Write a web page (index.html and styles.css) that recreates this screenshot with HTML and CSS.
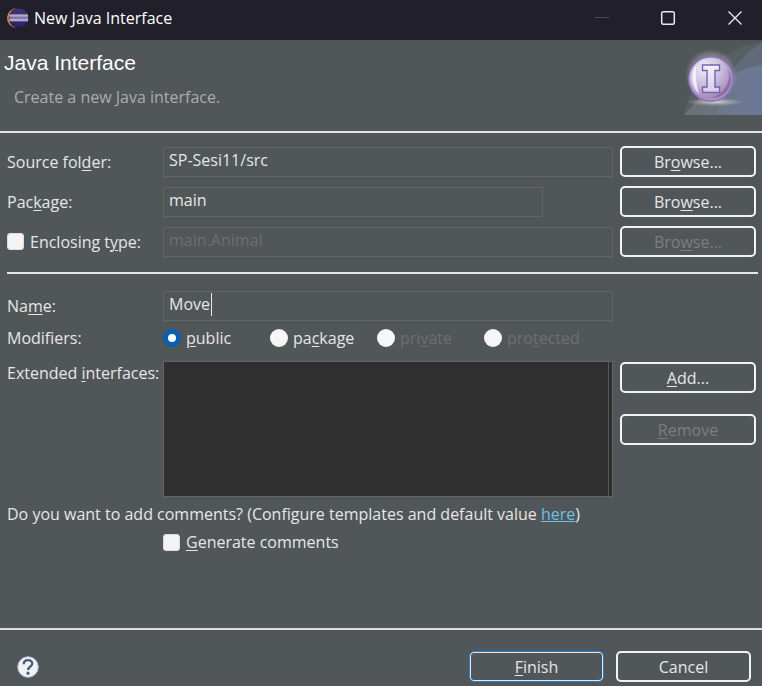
FILE: index.html
```html
<!DOCTYPE html>
<html lang="en">
<head>
<meta charset="utf-8">
<title>New Java Interface</title>
<link rel="stylesheet" href="styles.css">
</head>
<body>
<div class="dialog">
  <header class="titlebar">
    <svg class="app-icon" width="22" height="22" viewBox="0 0 22 22" aria-hidden="true">
      <defs><linearGradient id="ecl" x1="0" y1="0" x2="0" y2="1"><stop offset="0" stop-color="#43317c"/><stop offset="1" stop-color="#2b2165"/></linearGradient></defs>
      <circle cx="10" cy="11" r="10" fill="#d98a3a"/>
      <circle cx="12" cy="11" r="10.300" fill="#211f29"/>
      <circle cx="12" cy="11" r="9.500" fill="url(#ecl)"/>
      <path d="M2.500 7.500H20.800L21.300 14.500H2.500Z" fill="#8478ae"/>
      <path d="M2.500 8.500H21M2.500 13H21" stroke="#b5a8c6" stroke-width="1.800"/>
    </svg>
    <h1 class="window-title">New Java Interface</h1>
    <div class="window-controls">
      <button class="win-btn" type="button" aria-label="Minimize" disabled><svg width="16" height="16" viewBox="0 0 16 16"><path d="M1 7.500H15" stroke="#4b4a52" fill="none"/></svg></button>
      <button class="win-btn" type="button" aria-label="Maximize"><svg width="16" height="16" viewBox="0 0 16 16"><rect x="1.700" y="1.700" width="12.600" height="12.600" rx="1.500" stroke="#e8e8ea" stroke-width="1.500" fill="none"/></svg></button>
      <button class="win-btn" type="button" aria-label="Close"><svg width="16" height="16" viewBox="0 0 16 16"><path d="M1.500 1.500L14.500 14.500M14.500 1.500L1.500 14.500" stroke="#e8e8ea" stroke-width="1.400" fill="none"/></svg></button>
    </div>
  </header>

  <section class="banner">
    <div class="banner-text">
      <h2 class="banner-title">Java Interface</h2>
      <p class="banner-desc">Create a new Java interface.</p>
    </div>
    <svg class="banner-art" width="80" height="75" viewBox="0 0 80 75" aria-hidden="true">
      <defs>
        <linearGradient id="wash" x1="0" y1="0" x2="1" y2="0"><stop offset="0" stop-color="#6a7175"/><stop offset="1" stop-color="#68748e"/></linearGradient>
        <radialGradient id="ball" cx=".35" cy=".25" r=".85"><stop offset="0" stop-color="#f0ebf8"/><stop offset=".45" stop-color="#cbbddd"/><stop offset=".8" stop-color="#a78bba"/><stop offset="1" stop-color="#b99bca"/></radialGradient>
        <radialGradient id="glow"><stop offset=".7" stop-color="#c8c8cc" stop-opacity=".45"/><stop offset="1" stop-color="#c8c8cc" stop-opacity="0"/></radialGradient>
        <radialGradient id="floor"><stop offset="0" stop-color="#d5d5d5"/><stop offset="1" stop-color="#b5b5b5" stop-opacity="0"/></radialGradient>
        <linearGradient id="letter" x1="0" y1="0" x2="0" y2="1"><stop offset="0" stop-color="#f4f2fa"/><stop offset="1" stop-color="#d6cbe6"/></linearGradient>
      </defs>
      <path d="M2 75C8 42 36 8 80 2V75Z" fill="#585f63"/>
      <path d="M2 75C24 50 46 31 80 25V75Z" fill="url(#wash)"/>
      <path d="M36 75C37 48 54 17 80 3V75Z" fill="#7282a4" opacity=".35"/>
      <circle cx="29" cy="35" r="26" fill="url(#glow)"/>
      <ellipse cx="33" cy="62" rx="29" ry="4" fill="url(#floor)"/>
      <circle cx="29" cy="39" r="22.200" fill="url(#ball)" stroke="#8a73bd" stroke-width="1.400"/>
      <path d="M14.500 25C8 34 9 46 17 54C14 44 13 34 14.500 25Z" fill="#fff" opacity=".75"/>
      <path d="M46 29C50 43 41 54 30 58C46 58 53 42 46 29Z" fill="#7e5c99" opacity=".65"/>
      <path d="M20.500 25H37.500V30.500H33V47H37.500V52.500H20.500V47H25V30.500H20.500Z" fill="url(#letter)" stroke="#7464b0" stroke-width="1.400"/>
    </svg>
  </section>

  <form class="form">
    <div class="grid">
      <label class="label" for="source">Source fol<u>d</u>er:</label>
      <input class="field" id="source" type="text" value="SP-Sesi11/src">
      <button class="btn" type="button">Br<u>o</u>wse...</button>

      <label class="label" for="package">Pac<u>k</u>age:</label>
      <input class="field field-short" id="package" type="text" value="main">
      <button class="btn" type="button">Bro<u>w</u>se...</button>

      <label class="label check"><input class="tick" type="checkbox"><span>Enclosing t<u>y</u>pe:</span></label>
      <input class="field" type="text" value="main.Animal" aria-label="Enclosing type" disabled>
      <button class="btn" type="button" disabled>Bro<u>w</u>se...</button>
    </div>

    <hr class="rule">

    <div class="grid grid-details">
      <label class="label" for="name">Na<u>m</u>e:</label>
      <div class="name-box">
        <input class="field" id="name" type="text" value="Move">
        <span class="caret"></span>
      </div>
      <span></span>

      <span class="label" id="mods">Modifiers:</span>
      <div class="radios" role="radiogroup" aria-labelledby="mods">
        <label class="radio"><input class="dot" type="radio" name="mod" checked><span><u>p</u>ublic</span></label>
        <label class="radio"><input class="dot" type="radio" name="mod"><span>pa<u>c</u>kage</span></label>
        <label class="radio off"><input class="dot" type="radio" name="mod" disabled><span>pri<u>v</u>ate</span></label>
        <label class="radio off"><input class="dot" type="radio" name="mod" disabled><span>pro<u>t</u>ected</span></label>
      </div>

      <span class="label label-top" id="ext">Extended <u>i</u>nterfaces:</span>
      <div class="list" role="listbox" aria-labelledby="ext"></div>
      <div class="stack">
        <button class="btn" type="button"><u>A</u>dd...</button>
        <button class="btn" type="button" disabled><u>R</u>emove</button>
      </div>
    </div>

    <p class="question">Do you want to add comments? (Configure templates and default value <a class="link" href="#">here</a>)</p>
    <div class="grid">
      <label class="check generate"><input class="tick" type="checkbox"><span><u>G</u>enerate comments</span></label>
    </div>
  </form>

  <footer class="footer">
    <button class="help" type="button" aria-label="Help">
      <svg width="22" height="22" viewBox="0 0 22 22"><circle cx="11" cy="11" r="10.300" fill="#f1f2f4" stroke="#aab9d0"/><path d="M6.700 8.200C6.800 2.800 15.500 3 15.300 7.800C15.200 10.600 11.200 10.500 11.100 14" fill="none" stroke="#465c86" stroke-width="2.300"/><circle cx="11" cy="17.200" r="1.600" fill="#465c86"/></svg>
    </button>
    <div class="actions">
      <button class="btn btn-default" type="submit"><u>F</u>inish</button>
      <button class="btn" type="button">Cancel</button>
    </div>
  </footer>
</div>
</body>
</html>
```
FILE: styles.css
```css
* { box-sizing: border-box; }

body {
  margin: 0;
  background: #515658;
  color: #e6e6e6;
  font: 16px/22px "Open Sans", "Noto Sans", sans-serif;
}

h1, h2, p { margin: 0; font-weight: 400; }
u { text-underline-offset: 2px; text-decoration-thickness: 1px; }
button, input { font: inherit; color: inherit; }

.dialog {
  display: flex;
  flex-direction: column;
  min-height: 100vh;
}

.titlebar {
  display: flex;
  align-items: center;
  height: 40px;
  padding: 0 0 4px 7px;
  background: #211f29;
}
.window-title {
  flex: 1;
  margin-left: 5px;
  font-size: 16px;
  line-height: 22px;
  color: #fff;
}
.window-controls { display: flex; }
.win-btn {
  display: grid;
  place-items: center;
  width: 66px;
  height: 36px;
  padding: 0;
  border: 0;
  background: none;
}
.win-btn:last-child { width: 61px; padding-left: 6px; }

.banner {
  display: flex;
  justify-content: space-between;
  height: 93px;
  border-bottom: 2px solid #e2e2e2;
}
.banner-text { padding: 11px 0 0 4px; }
.banner-title {
  font: 21px/24px "Liberation Sans", sans-serif;
  color: #fff;
}
.banner-desc {
  margin: 11px 0 0 10px;
  color: #acacac;
}

.form { flex: 1; padding: 13px 6px 0 7px; }

.grid {
  display: grid;
  grid-template-columns: 156px minmax(0, 1fr) 136px;
  row-gap: 9px;
  align-items: center;
}
.label { white-space: nowrap; }
.check { display: flex; align-items: center; gap: 6px; }
.tick {
  appearance: none;
  width: 17px;
  height: 17px;
  margin: 0;
  border: 1px solid #dcdcdc;
  border-radius: 3px;
  background: #f3f3f3;
}

.field {
  display: block;
  width: calc(100% - 7px);
  height: 30px;
  padding: 0 5px 4px;
  border: 1px solid #646464;
  background: transparent;
  outline: 0;
}
.field-short { width: calc(100% - 77px); }
.field:disabled { color: #6e6e6e; }

.btn {
  height: 31px;
  width: 136px;
  padding: 0;
  border: 2px solid #f2f2f2;
  border-radius: 5px;
  background: transparent;
}
.btn:disabled { color: #7d7d7d; }

.rule {
  height: 2px;
  margin: 15px -2px 17px 0;
  border: 0;
  background: #e6e6e6;
}

.grid-details { row-gap: 6px; }
.name-box { position: relative; }
.caret {
  position: absolute;
  left: 48px;
  top: 2px;
  width: 1px;
  height: 23px;
  background: #e6e6e6;
}
.radios {
  display: grid;
  grid-template-columns: repeat(4, 107px);
  grid-column: 2 / 4;
}
.radio { display: flex; align-items: center; gap: 5px; }
.dot {
  appearance: none;
  width: 18px;
  height: 18px;
  margin: 0;
  border-radius: 50%;
  background: #f6f6f6;
}
.dot:checked { border: 5px solid #0560b8; background: #fff; }
.off { color: #6e6e6e; }

.label-top { align-self: start; padding-top: 7px; }
.list {
  width: calc(100% - 7px);
  height: 136px;
  margin-top: 6px;
  border: 1px solid #646464;
  background: linear-gradient(#55585a, #55585a) right 3px top / 1px 100% no-repeat #2f2f2f;
}
.stack {
  display: flex;
  flex-direction: column;
  gap: 21px;
  align-self: start;
  padding-top: 7px;
}

.question { margin: 6px 0; }
.link { color: #6fc0e0; }
.generate { grid-column: 2 / 4; }

.footer {
  display: flex;
  justify-content: space-between;
  align-items: center;
  height: 58px;
  padding: 17px 11px 0 17px;
  border-top: 2px solid #dedede;
}
.help { display: flex; padding: 0; border: 0; background: none; }
.actions { display: flex; gap: 12px; }
.actions .btn { width: 135px; }
.btn-default {
  border: 1px solid #1d83d8;
  box-shadow: inset 0 0 0 1px #e6e6e6;
}
```
